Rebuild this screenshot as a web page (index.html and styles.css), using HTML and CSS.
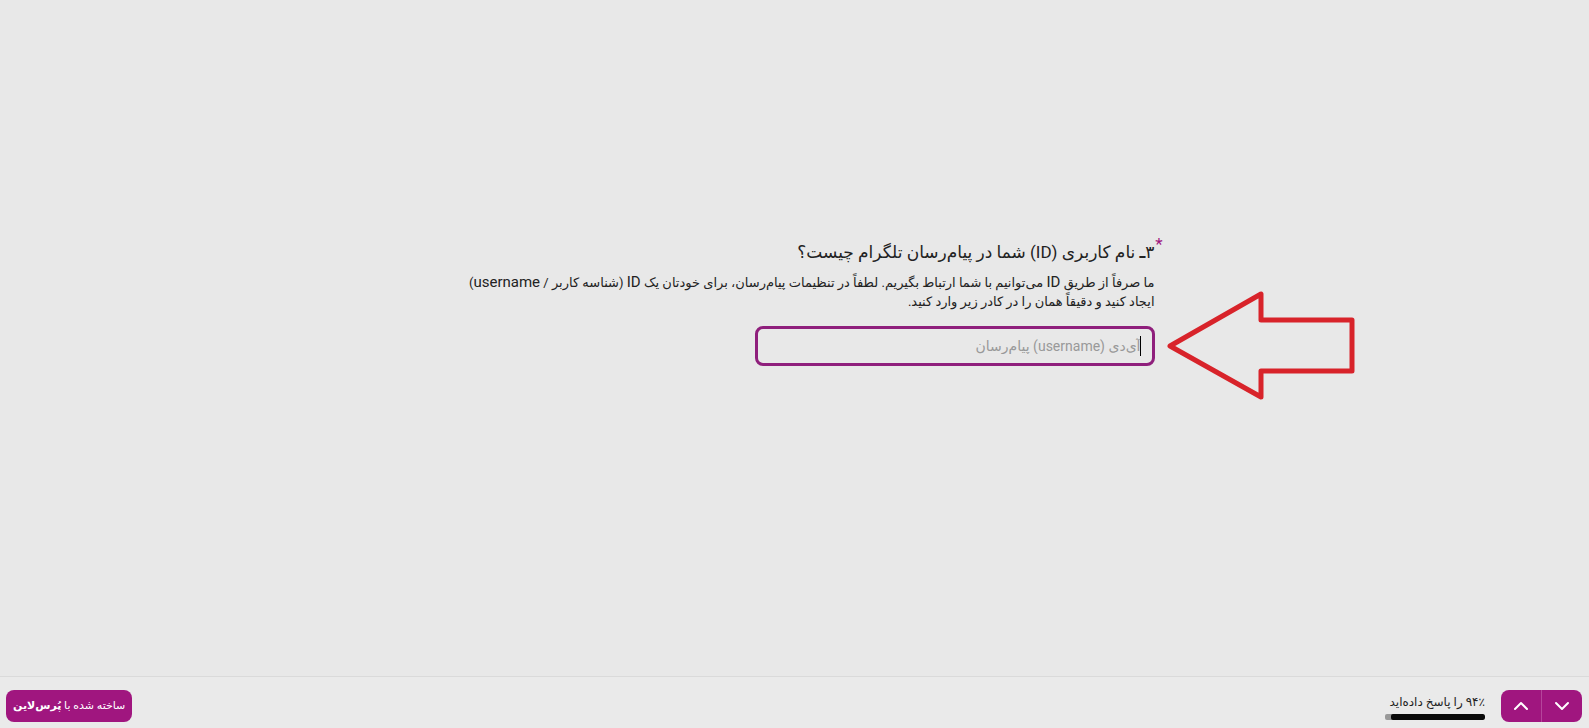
FILE: index.html
```html
<!DOCTYPE html>
<html lang="fa" dir="rtl">
  <head>
    <meta charset="UTF-8" />
    <meta name="viewport" content="width=device-width, initial-scale=1.0" />
    <title>پُرس‌لاین</title>
    <link rel="stylesheet" href="styles.css">
  </head>
  <body>
    <main class="content">
      <form class="question">
        <label class="question-title" for="username">
          <span class="required">*</span>
          <span>۳<b>ـ </b>نام کاربری (ID) شما در پیام‌رسان تلگرام چیست؟</span>
        </label>
        <p class="question-text" id="usernameHelp">
          ما صرفاً از طریق <span class="latin">ID</span> می‌توانیم با شما ارتباط بگیریم. لطفاً در تنظیمات پیام‌رسان، برای خودتان یک <span class="latin">ID</span> (شناسه کاربر / <span class="latin">username</span>)<br />
          ایجاد کنید و دقیقاً همان را در کادر زیر وارد کنید.
        </p>
        <div class="field">
          <input
            type="text"
            id="username"
            class="field-input"
            aria-describedby="usernameHelp"
            placeholder="آی‌دی (username) پیام‌رسان"
          />
          <span class="caret"></span>
          <svg class="arrow" width="190" height="112" viewBox="0 0 190 112" aria-hidden="true">
            <path d="M4 56 95 4V30H186V81H95V107Z" />
          </svg>
        </div>
      </form>
    </main>

    <footer class="footer">
      <div class="nav">
        <button type="button" class="nav-btn" aria-label="بعدی">
          <svg width="16" height="10" viewBox="0 0 16 10"><path d="M2 2l6 6 6-6" /></svg>
        </button>
        <button type="button" class="nav-btn" aria-label="قبلی">
          <svg width="16" height="10" viewBox="0 0 16 10"><path d="M2 8l6-6 6 6" /></svg>
        </button>
      </div>
      <div class="progress">
        <span class="progress-text">۹۴٪ را پاسخ داده‌اید</span>
        <div class="progress-track">
          <div class="progress-bar" style="width: 94%"></div>
        </div>
      </div>
      <a href="#" class="brand">ساخته شده با <b>پُرس‌لاین</b></a>
    </footer>
  </body>
</html>
```
FILE: styles.css
```css
* {
  box-sizing: border-box;
}

body {
  margin: 0;
  min-height: 100vh;
  display: flex;
  flex-direction: column;
  background-color: #e8e8e8;
  color: #222;
  font-family: Roboto, "DejaVu Sans", sans-serif;
}

.content {
  flex: 1;
  padding: 236px 16px 0;
}

.question {
  max-width: 720px;
  margin: 0 auto;
}

.question-title {
  position: relative;
  display: block;
  font-size: 17px;
  line-height: 32px;
  white-space: nowrap;
}

.required {
  position: absolute;
  right: -8px;
  top: -8px;
  color: #a0167f;
}

.question-text {
  margin: 5px 0 15px;
  font-size: 13px;
  line-height: 19px;
  white-space: nowrap;
}

.latin {
  font-size: 15px;
  line-height: 1;
}

.field {
  position: relative;
  max-width: 400px;
}

.field-input {
  display: block;
  width: 100%;
  height: 40px;
  padding: 0 11px;
  border: 3px solid #8f1f7c;
  border-radius: 8px;
  outline: none;
  background: transparent;
  color: #222;
  font-family: inherit;
  font-size: 14px;
}

.field-input::placeholder {
  color: #999;
  opacity: 1;
}

.caret {
  position: absolute;
  right: 14px;
  top: 10px;
  width: 1px;
  height: 20px;
  background-color: #000;
}

.arrow {
  position: absolute;
  left: 100%;
  top: -36px;
  margin-left: 11px;
  fill: none;
  stroke: #d8232a;
  stroke-width: 5;
  stroke-linejoin: round;
}

.footer {
  display: flex;
  align-items: center;
  gap: 16px;
  height: 52px;
  padding: 6px 7px 0 6px;
  border-top: 1px solid #dadada;
  background-color: #eaeaea;
}

.nav {
  display: flex;
  border-radius: 8px;
  overflow: hidden;
  background-color: #a0167f;
}

.nav-btn {
  display: flex;
  align-items: center;
  justify-content: center;
  width: 40px;
  height: 32px;
  padding: 0;
  border: none;
  background: transparent;
  cursor: pointer;
}

.nav-btn + .nav-btn {
  width: 41px;
  border-right: 1px solid #b5459b;
}

.nav-btn svg {
  fill: none;
  stroke: #fff;
  stroke-width: 2;
  stroke-linecap: round;
  stroke-linejoin: round;
}

.progress {
  display: flex;
  flex-direction: column;
  gap: 2px;
  width: 100px;
}

.progress-text {
  font-size: 12px;
  line-height: 20px;
  white-space: nowrap;
}

.progress-track {
  height: 6px;
  border-radius: 2px;
  overflow: hidden;
  background-color: #999;
}

.progress-bar {
  height: 100%;
  border-radius: 2px;
  background-color: #0a0a0a;
}

.brand {
  margin-right: auto;
  padding: 0 7px;
  border-radius: 8px;
  background-color: #a0167f;
  color: #fff;
  font-size: 11px;
  line-height: 32px;
  text-align: center;
  text-decoration: none;
  white-space: nowrap;
}
```
